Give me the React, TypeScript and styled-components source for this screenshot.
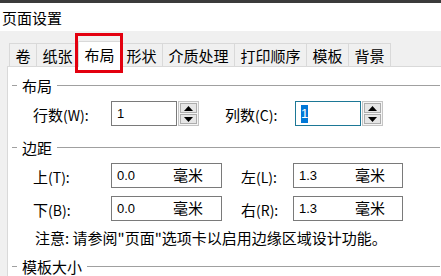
import { createGlobalStyle } from "styled-components";
import styled from "styled-components";

const GlobalStyle = createGlobalStyle`
  html, body {
    margin: 0;
    padding: 0;
    width: 441px;
    height: 276px;
    overflow: hidden;
    background: #f0f0f0;
  }
  body {
    font-family: "Noto Sans CJK SC", "Liberation Sans", sans-serif;
    color: #000;
  }
`;

const Window = styled.div`
  width: 441px;
  height: 276px;
  display: flex;
  flex-direction: column;
  background: #f0f0f0;
`;

const TopBar = styled.div`
  height: 4px;
  background: #3b3b3b;
`;

const TitleBar = styled.div`
  height: 32px;
  background: #ffffff;
  display: flex;
  align-items: center;
  padding-left: 2px;
  font-size: 15px;
`;

const Body = styled.div`
  flex: 1;
  padding: 10px 0 0 7px;
  display: flex;
  flex-direction: column;
`;

const TabStrip = styled.div`
  display: flex;
  align-items: flex-end;
  margin-left: 3px;
  height: 25px;
`;

const Tab = styled.div<{ $active?: boolean }>`
  position: relative;
  box-sizing: border-box;
  height: ${(p) => (p.$active ? "26px" : "23px")};
  padding: 0 5.5px;
  display: flex;
  align-items: center;
  font-size: 15px;
  line-height: 1;
  background: ${(p) => (p.$active ? "#ffffff" : "#f0f0f0")};
  border: 1px solid #d9d9d9;
  border-bottom: none;
  margin-left: -1px;
  margin-bottom: ${(p) => (p.$active ? "-1px" : "0")};
  z-index: ${(p) => (p.$active ? 2 : 1)};

  ${(p) =>
    p.$active &&
    `
    &::after {
      content: "";
      position: absolute;
      left: -4px;
      right: -3px;
      top: -9px;
      bottom: -6px;
      border: 3px solid #e3000f;
    }
  `}
`;

const Panel = styled.div`
  flex: 1;
  background: #ffffff;
  border-left: 1px solid #d9d9d9;
  border-top: 1px solid #d9d9d9;
  padding: 8px 0 0 0;
  width: 440px;
`;

const GroupHeader = styled.div<{ $top?: number }>`
  display: flex;
  align-items: center;
  height: 20px;
  margin-top: ${(p) => p.$top ?? 0}px;
  padding-left: 4px;
  font-size: 15px;
  gap: 5px;
`;

const Dash = styled.span`
  width: 5px;
  height: 1px;
  background: #a0a0a0;
`;

const HeaderLine = styled.span`
  flex: 1;
  height: 1px;
  background: #a0a0a0;
  margin-right: 8px;
`;

const Row = styled.div<{ $top: number }>`
  display: flex;
  align-items: center;
  height: 25px;
  margin-top: ${(p) => p.$top}px;
  padding-left: 25px;
`;

const Label = styled.span<{ $w: number; $gap?: number }>`
  flex: none;
  width: ${(p) => p.$w}px;
  margin-left: ${(p) => p.$gap ?? 0}px;
  font-size: 15px;
  padding-top: 2px;
`;

const Letter = styled.span`
  font-size: 14px;
`;

const InputBox = styled.div<{ $w: number; $focus?: boolean }>`
  flex: none;
  box-sizing: border-box;
  width: ${(p) => p.$w}px;
  height: 25px;
  border: 1px solid ${(p) => (p.$focus ? "#1d7896" : "#7a7a7a")};
  background: #fff;
  display: flex;
  align-items: center;
  padding-left: 5px;
  font-family: "Liberation Sans", sans-serif;
  font-size: 13px;
`;

const Selected = styled.span`
  background: #0078d7;
  color: #fff;
  padding: 1px 0 2px;
`;

const Value = styled.span`
  flex: none;
  display: inline-block;
  width: 56px;
`;

const Unit = styled.span`
  flex: none;
  font-family: "Noto Sans CJK SC", sans-serif;
  font-size: 15px;
  margin-top: -3px;
`;

const Spinner = styled.div`
  flex: none;
  box-sizing: border-box;
  width: 21px;
  height: 25px;
  margin-left: 1px;
  border: 1px solid #c4c4c4;
  display: flex;
  flex-direction: column;
  padding: 1px;
  gap: 1px;
  background: #f5f5f5;
`;

const SpinButton = styled.div`
  flex: 1;
  border: 1px solid #adadad;
  background: #e6e6e6;
  display: flex;
  align-items: center;
  justify-content: center;
`;

const Note = styled.div`
  margin-top: 7px;
  height: 20px;
  line-height: 20px;
  padding-left: 27px;
  font-size: 15px;
`;

const Arrow = ({ up }: { up?: boolean }) => (
  <svg width="9" height="5" viewBox="0 0 9 5">
    <path d={up ? "M0 5 L4.5 0 L9 5 Z" : "M0 0 L4.5 5 L9 0 Z"} fill="#000" />
  </svg>
);

const Spin = () => (
  <Spinner>
    <SpinButton>
      <Arrow up />
    </SpinButton>
    <SpinButton>
      <Arrow />
    </SpinButton>
  </Spinner>
);

const Header = ({ title, top }: { title: string; top?: number }) => (
  <GroupHeader $top={top}>
    <Dash />
    <span>{title}</span>
    <HeaderLine />
  </GroupHeader>
);

const tabs = ["卷", "纸张", "布局", "形状", "介质处理", "打印顺序", "模板", "背景"];

const MarginField = ({ value }: { value: string }) => (
  <>
    <Value>{value}</Value>
    <Unit>毫米</Unit>
  </>
);

export default function App() {
  return (
    <Window>
      <GlobalStyle />
      <TopBar />
      <TitleBar>页面设置</TitleBar>
      <Body>
        <TabStrip>
          {tabs.map((t) => (
            <Tab key={t} $active={t === "布局"}>
              {t}
            </Tab>
          ))}
        </TabStrip>
        <Panel>
          <Header title="布局" />
          <Row $top={6}>
            <Label $w={78}>
              行数<Letter>(W):</Letter>
            </Label>
            <InputBox $w={66}>1</InputBox>
            <Spin />
            <Label $w={70} $gap={26}>
              列数<Letter>(C):</Letter>
            </Label>
            <InputBox $w={66} $focus>
              <Selected>1</Selected>
            </InputBox>
            <Spin />
          </Row>
          <Header title="边距" top={11} />
          <Row $top={6}>
            <Label $w={78}>
              上<Letter>(T):</Letter>
            </Label>
            <InputBox $w={111}>
              <MarginField value="0.0" />
            </InputBox>
            <Label $w={52} $gap={19}>
              左<Letter>(L):</Letter>
            </Label>
            <InputBox $w={110}>
              <MarginField value="1.3" />
            </InputBox>
          </Row>
          <Row $top={8}>
            <Label $w={78}>
              下<Letter>(B):</Letter>
            </Label>
            <InputBox $w={111}>
              <MarginField value="0.0" />
            </InputBox>
            <Label $w={52} $gap={19}>
              右<Letter>(R):</Letter>
            </Label>
            <InputBox $w={110}>
              <MarginField value="1.3" />
            </InputBox>
          </Row>
          <Note>注意: 请参阅"页面"选项卡以启用边缘区域设计功能。</Note>
          <Header title="模板大小" top={8} />
        </Panel>
      </Body>
    </Window>
  );
}
